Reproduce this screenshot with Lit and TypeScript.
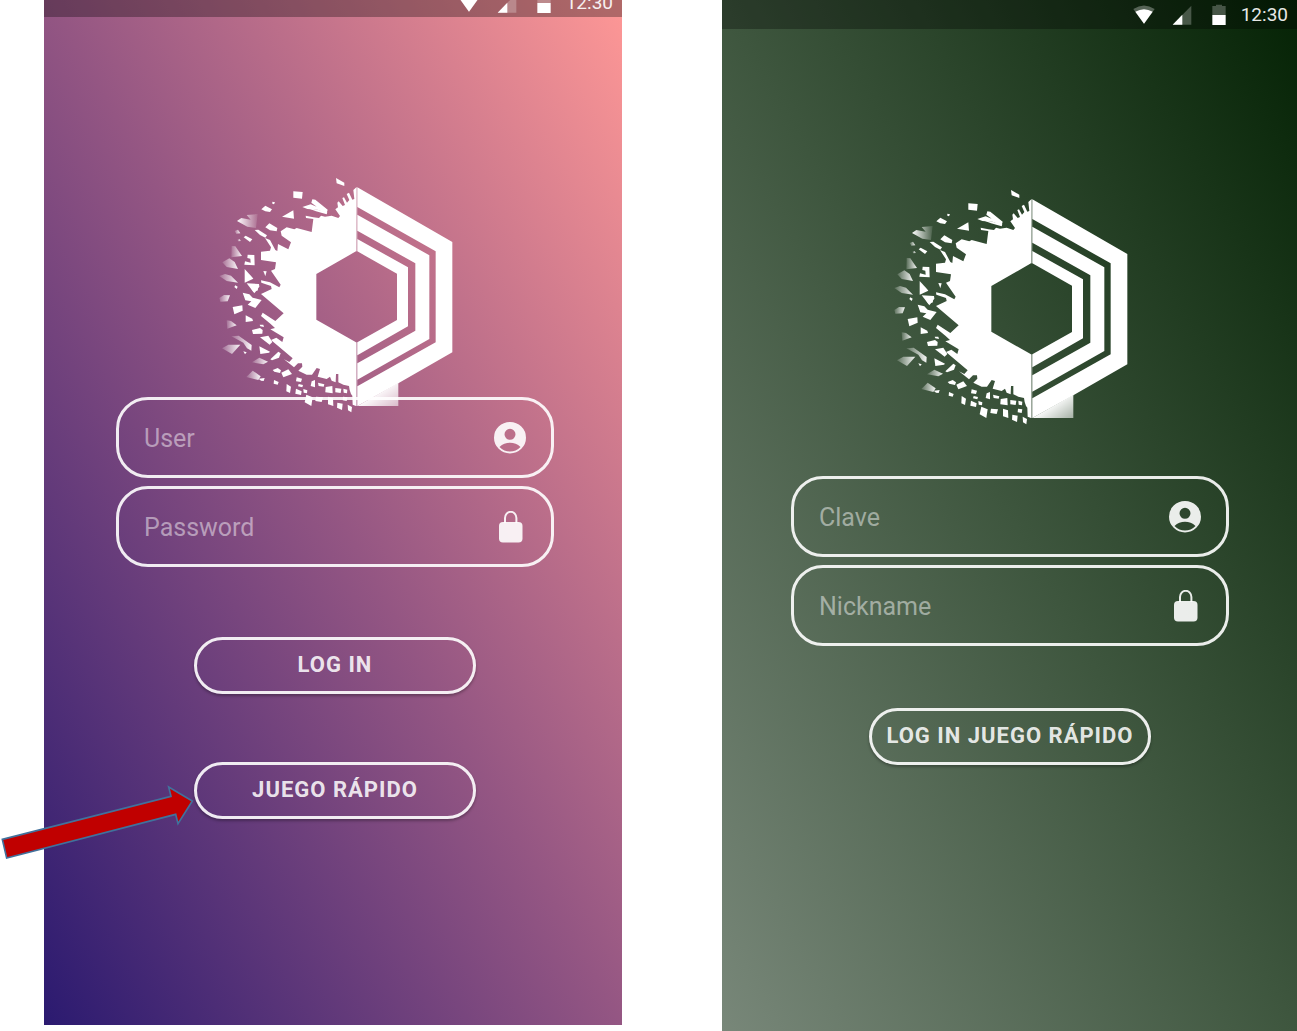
import { LitElement, html, css, svg, nothing } from "lit";
import { customElement, property } from "lit/decorators.js";

/* Solid left half of the emblem, with its shattered outer edge. */
const BODY =
  "439,52 430,60 433,87 427,89 417,68 410,72 418,90 411,98 402,82 397,84 405,105 398,108 386,94 382,98 384,112 376,118 390,138 385,144 365,137 345,140 333,137 327,144 310,142 287,137 288,144 310,147 305,186 260,174 253,178 230,172 212,184 215,197 243,217 235,238 204,222 202,243 196,240 180,210 165,204 183,232 180,242 153,245 153,270 198,277 195,297 183,302 212,344 208,352 180,337 153,331 154,338 183,348 185,357 153,372 221,430 196,453 158,428 153,438 182,462 195,474 181,478 221,502 217,516 199,503 183,510 248,565 238,576 222,568 252,592 264,580 276,580 277,590 265,602 290,614 306,614 320,594 330,597 323,620 350,627 360,620 365,632 377,637 378,612 385,612 385,637 400,644 417,648 419,660 423,672 427,677 428,704 438,708 438,517 319,449 319,312 438,244";

/* Loose shards, fully opaque. */
const SHARDS = [
  "378,24 403,38 403,48 380,40",
  "250,64 278,66 276,86 250,83",
  "187,95 195,97 192,103 187,101",
  "154,118 166,107 186,118 180,126 166,124",
  "216,140 250,121 252,146",
  "277,111 302,103 320,110 304,98 307,88 316,89 353,119 350,130 322,119 292,117",
  "292,114 322,119 352,127 350,133 318,124",
  "166,172 178,160 202,174 200,184 180,181",
  "134,180 145,179 171,196 166,203 150,195",
  "101,202 107,197 127,208 120,216",
  "113,254 133,255 134,286 103,284 105,274 122,278 121,266 112,264",
  "104,297 126,321 130,326 104,338",
  "110,340 147,342 148,350 133,370",
  "160,303 170,304 166,319",
  "98,368 118,373 128,383 155,390 136,414 113,404 124,394 106,391",
  "122,352 143,353 144,361 130,366",
  "68,411 97,406 98,422 73,433",
  "107,436 127,446 129,453 107,456",
  "126,480 150,474 158,480 157,491 129,492",
  "149,464 160,464 162,471 151,469",
  "150,502 175,497 187,516 179,524",
  "148,529 180,545 177,548 151,552",
  "181,568 205,545 212,550 207,563 186,571",
  "188,600 203,594 213,601 210,609 193,605",
  "214,608 235,598 246,612 220,622",
  "146,626 164,624 161,633 153,632",
  "192,630 206,636 203,644 191,641",
  "230,642 243,650 240,669 229,664",
  "258,656 275,664 273,675 256,671",
  "260,622 276,626 273,636 258,634",
  "289,674 308,682 304,708 284,697",
  "305,634 315,630 315,652 302,648",
  "280,657 292,661 291,670 281,668",
  "266,642 279,645 277,652 264,649",
  "324,638 343,643 341,650 326,648",
  "318,680 339,682 335,696 316,693",
  "347,651 367,648 368,670 346,667",
  "354,680 369,685 370,708 354,703",
  "376,654 394,656 392,669 376,667",
  "400,656 412,659 411,670 401,668",
  "382,698 398,701 396,720 381,713",
  "399,680 412,682 410,693 398,691",
  "413,704 426,711 424,727 414,721",
  "100,544 110,547 105,553",
  "76,346 83,350 80,357 73,351",
];

/* Outer shards that dissolve towards the left or the right edge. */
const FADE_LEFT = [
  "65,228 76,229 96,258 64,262",
  "37,277 58,265 74,276 84,297 50,291",
  "28,318 45,312 63,317 84,338 50,333",
  "28,384 42,375 60,376 53,394 31,395",
  "50,451 63,453 80,466 52,476",
  "64,499 86,497 125,525 124,542 111,535 100,518",
  "36,535 55,524 91,524 66,552",
  "126,577 148,563 174,575 160,583",
  "109,621 128,602 152,619 145,630",
  "74,183 84,179 91,190 79,191",
  "82,209 89,207 92,213 85,214",
];
const FADE_RIGHT = ["81,153 94,144 122,149 110,135 143,132 138,174 112,170"];

const ICON_USER = svg`<svg class="icon" viewBox="0 0 32 32" aria-hidden="true">
  <path fill="currentColor" fill-rule="evenodd"
    d="M16 0a16 15.700 0 1 0 0 31.400a16 15.700 0 1 0 0-31.400zM16 6.800a5.500 5.500 0 1 1 0 11a5.500 5.500 0 1 1 0-11zM5.500 25C8.500 22 12 20.700 16 20.700s7.500 1.300 10.500 4.300C23.500 28.300 20 29.600 16 29.600S8.500 28.300 5.500 25z"/>
</svg>`;

const ICON_LOCK = svg`<svg class="icon" viewBox="0 0 32 32" aria-hidden="true">
  <rect x="5" y="11" width="23.500" height="20.500" rx="4" fill="currentColor"/>
  <path d="M11 12V7a5.700 6.200 0 0 1 11.400 0V12" fill="none" stroke="currentColor" stroke-width="2"/>
</svg>`;

@customElement("brand-emblem")
export class BrandEmblem extends LitElement {
  static styles = css`
    :host { display: block; width: 250px; }
    .art { display: block; width: 100%; height: auto; }
  `;

  render() {
    return html`<svg class="art" viewBox="0 0 750 750" role="img" aria-label="Logo">
      <defs>
        <linearGradient id="fadeL">
          <stop offset="0" stop-color="#fff" stop-opacity="0.15" />
          <stop offset="1" stop-color="#fff" stop-opacity="0.95" />
        </linearGradient>
        <linearGradient id="fadeR">
          <stop offset="0" stop-color="#fff" />
          <stop offset="1" stop-color="#fff" stop-opacity="0.1" />
        </linearGradient>
        <linearGradient id="foot" gradientUnits="userSpaceOnUse" x1="495" y1="640" x2="560" y2="735">
          <stop offset="0.200" stop-color="#fff" />
          <stop offset="1" stop-color="#fff" stop-opacity="0.450" />
        </linearGradient>
      </defs>
      <polygon points=${BODY} fill="#fff" />
      ${SHARDS.map((p) => svg`<polygon points=${p} fill="#fff"/>`)}
      ${FADE_LEFT.map((p) => svg`<polygon points=${p} fill="url(#fadeL)"/>`)}
      ${FADE_RIGHT.map((p) => svg`<polygon points=${p} fill="url(#fadeR)"/>`)}
      <rect x="438" y="52" width="4" height="192" fill="#fff" opacity="0.500" />
      <rect x="438" y="517" width="4" height="191" fill="#fff" opacity="0.500" />
      <path fill="#fff" d="M442 52L727 216V547L565 640L442 708V649L677 517V244L442 111z" />
      <path fill="#fff" d="M442 134L658 256V507L442 629V580L616 482V280L442 182z" />
      <path fill="#fff" d="M442 207L594 292V469L442 556V517L561 450V311L442 244z" />
      <path fill="url(#foot)" d="M442 708L565 638V708z" />
    </svg>`;
  }
}

@customElement("status-bar")
export class StatusBar extends LitElement {
  static styles = css`
    :host {
      display: flex;
      align-items: center;
      justify-content: flex-end;
      height: 29px;
      padding-right: 9px;
      background: rgba(0, 0, 0, 0.3);
      color: #fff;
      font: 400 19px/29px Roboto, sans-serif;
    }
    .glyph { display: block; height: 22px; }
    .wifi { width: 22px; margin-right: 17px; }
    .signal { width: 20px; margin-right: 20px; }
    .battery { width: 14px; margin-right: 15px; }
    .time { opacity: 0.9; }
  `;

  render() {
    return html`
      <svg class="glyph wifi" viewBox="0 0 66 66" aria-hidden="true">
        <path d="M1 15Q33-6 65 15L33 59z" fill="#fff" opacity="0.300" />
        <path d="M7 23Q33 8 59 23L33 59z" fill="#fff" />
      </svg>
      <svg class="glyph signal" viewBox="0 0 60 66" aria-hidden="true">
        <path d="M2 62L58 5V62z" fill="#fff" opacity="0.250" />
        <path d="M2 62L31 32V62z" fill="#fff" />
      </svg>
      <svg class="glyph battery" viewBox="0 0 42 66" aria-hidden="true">
        <path d="M1 33V6H12V2H30V6H41V33z" fill="#fff" opacity="0.250" />
        <path d="M1 33H41V63H1z" fill="#fff" />
      </svg>
      <span class="time">12:30</span>
    `;
  }
}

@customElement("login-screen")
export class LoginScreen extends LitElement {
  @property() first = "";
  @property() second = "";
  @property({ type: Boolean }) secret = false;
  @property({ attribute: false }) actions: string[] = [];

  static styles = css`
    :host { display: block; font-family: Roboto, sans-serif; }
    .content {
      display: flex;
      flex-direction: column;
      align-items: center;
      padding: 153px 0 60px var(--content-inset, 4px);
    }
    .form {
      display: flex;
      flex-direction: column;
      align-items: center;
      width: 100%;
      margin-top: var(--form-gap, 44px);
    }
    .fields {
      display: flex;
      flex-direction: column;
      gap: 8px;
      width: calc(100% - 136px);
    }
    .field {
      display: flex;
      align-items: center;
      box-sizing: border-box;
      height: 81px;
      padding: 0 25px;
      border: 3px solid rgba(255, 255, 255, 0.9);
      border-radius: 32px;
      color: rgba(255, 255, 255, 0.9);
    }
    .input {
      flex: 1;
      min-width: 0;
      padding: 2px 0 0;
      border: 0;
      outline: 0;
      background: none;
      color: #fff;
      font: 400 25px/32px Roboto, sans-serif;
    }
    .input::placeholder { color: rgba(255, 255, 255, 0.47); opacity: 1; }
    .icon { display: block; width: 32px; height: 32px; }
    .actions {
      display: flex;
      flex-direction: column;
      gap: 68px;
      margin-top: var(--actions-gap, 62px);
    }
    .action {
      box-sizing: border-box;
      width: 282px;
      height: 57px;
      padding: 0 0 2px;
      border: 3px solid rgba(255, 255, 255, 0.9);
      border-radius: 29px;
      background: none;
      box-shadow: 0 2px 3px rgba(0, 0, 0, 0.3);
      color: rgba(255, 255, 255, 0.87);
      font: 700 22px/28px Roboto, sans-serif;
      letter-spacing: 1px;
      white-space: nowrap;
    }
  `;

  render() {
    return html`
      <status-bar></status-bar>
      <div class="content">
        <brand-emblem></brand-emblem>
        <form class="form" @submit=${(e: Event) => e.preventDefault()}>
          <div class="fields">
            <label class="field">
              <input class="input" type="text" placeholder=${this.first} aria-label=${this.first} />
              ${ICON_USER}
            </label>
            <label class="field">
              <input
                class="input"
                type=${this.secret ? "password" : "text"}
                placeholder=${this.second}
                aria-label=${this.second}
              />
              ${ICON_LOCK}
            </label>
          </div>
          ${this.actions.length
            ? html`<div class="actions">
                ${this.actions.map((a) => html`<button class="action" type="button">${a}</button>`)}
              </div>`
            : nothing}
        </form>
      </div>
    `;
  }
}

@customElement("app-root")
export class AppRoot extends LitElement {
  static styles = css`
    :host { display: block; background: #fff; }
    .board {
      display: grid;
      grid-template-columns: 578fr 575fr;
      column-gap: 100px;
      box-sizing: border-box;
      min-height: 100vh;
      padding-left: 44px;
      overflow: hidden;
    }
    .screen { position: relative; }
    .main {
      --form-gap: -23px;
      --actions-gap: 70px;
      margin: -12px 0 6px;
      background: linear-gradient(to top right, #2b1a70, #945683 50%, #ff9896);
    }
    .quick {
      --content-inset: 1px;
      background: linear-gradient(to top right, #788779, #3e563e 50%, #052305);
    }
    .arrow {
      position: absolute;
      top: 792px;
      left: -44px;
      width: 200px;
      height: 84px;
    }
  `;

  render() {
    return html`
      <main class="board">
        <section class="screen main">
          <login-screen
            first="User"
            second="Password"
            secret
            .actions=${["LOG IN", "JUEGO RÁPIDO"]}
          ></login-screen>
          <svg class="arrow" viewBox="0 0 600 252" aria-hidden="true">
            <polygon
              points="7,178 513,49 506,21 577,63 534,131 527,103 20,234"
              fill="#c00000" stroke="#41719c" stroke-width="5"
            />
          </svg>
        </section>
        <section class="screen quick">
          <login-screen
            first="Clave"
            second="Nickname"
            .actions=${["LOG IN JUEGO RÁPIDO"]}
          ></login-screen>
        </section>
      </main>
    `;
  }
}
